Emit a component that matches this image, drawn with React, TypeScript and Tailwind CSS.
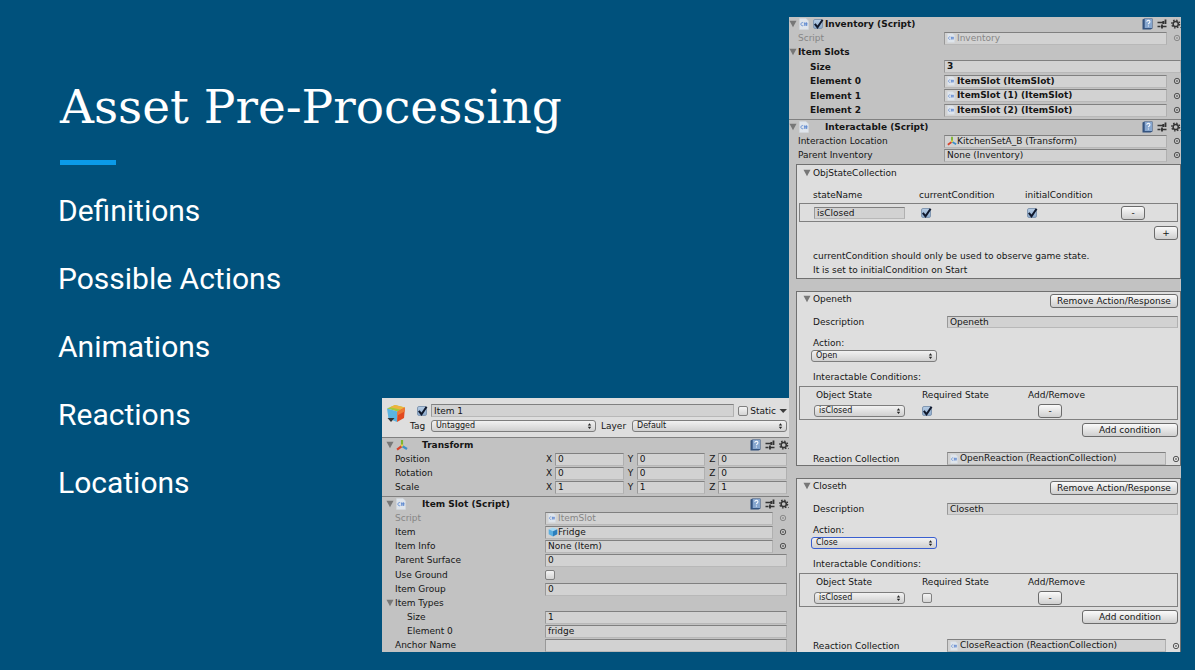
import { ReactNode, useId } from "react";

const FIELD =
  "min-w-0 border border-t-[#808080] border-l-[#999999] border-r-[#b0b0b0] border-b-[#b8b8b8] bg-[#d2d2d2]";
const BUTTON =
  "flex h-3.5 items-center justify-center rounded-[3px] border border-[#6b6b6b] bg-linear-to-b from-[#fafafa] to-[#cfcfcf]";

function Fold({ label, dark }: { label: string; dark?: boolean }) {
  return (
    <button type="button" aria-label={`Fold ${label}`} className="block w-2 shrink-0">
      <svg viewBox="0 0 8 8" className="block h-2 w-2">
        <path d={dark ? "M0.5 2h7.500L4.200 6z" : "M0.500 .8h7L4 7.200z"} fill={dark ? "#3c3c3c" : "#777777"} />
      </svg>
    </button>
  );
}

function ScriptIcon({ small }: { small?: boolean }) {
  return (
    <svg viewBox="0 0 10 12" className={small ? "h-2.5 w-2 shrink-0" : "h-3 w-2.5 shrink-0"}>
      <path d="M0.5 0.5h6.5l2.5 2.5v8.5h-9z" fill="#dfe5ec" stroke="#d2d8de" strokeWidth="0.5" />
      <path d="M4.3 4.8a1.6 1.6 0 1 0 0 2.7M5.8 4.3v3.6M7.5 4.3v3.6M5 5.4h3.6M5 6.9h3.6" fill="none" stroke="#5b86cf" strokeWidth="0.8" />
    </svg>
  );
}

function AxesIcon({ small }: { small?: boolean }) {
  return (
    <svg viewBox="0 0 12 12" className={small ? "-mr-0.5 h-2.5 w-2.5 shrink-0" : "h-3 w-3 shrink-0"}>
      <path d="M6 7V1" stroke="#7fb52e" strokeWidth="2.200" />
      <path d="M6 7l-5 3.6" stroke="#d8432b" strokeWidth="2.200" />
      <path d="M6 7l5 3" stroke="#3c8fc9" strokeWidth="2.200" />
      <path d="M6 5.5v2" stroke="#e8d24a" strokeWidth="2.200" />
    </svg>
  );
}

function CubeIcon() {
  return (
    <svg viewBox="0 0 20 20" className="h-5 w-5 shrink-0">
      <path d="M1 4.500L9 1l10 2.500-7.500 4z" fill="#a3c93a" />
      <path d="M4 3.200L9 1l10 2.500-4 2.200z" fill="#f0b23c" />
      <path d="M1 4.500l10.500 3-.5 10.500-8.500-3.500z" fill="#5bb4e0" />
      <path d="M11.500 7.500L19 3.500l-1 10.500-7 4z" fill="#e2491f" />
      <path d="M11.500 7.500L19 3.500l-.4 4-7.300 4z" fill="#ee7a35" />
      <path d="M1.500 14h7L5 18z" fill="#333333" />
    </svg>
  );
}

function PrefabIcon() {
  return (
    <svg viewBox="0 0 10 10" className="-mr-0.5 h-2.5 w-2.5 shrink-0">
      <path d="M5 0.500l4.300 1.800L5 4.300.700 2.300z" fill="#a5d8f3" />
      <path d="M.7 2.300L5 4.300v5.300L.7 7.300z" fill="#5aaee0" />
      <path d="M9.300 2.300L5 4.300v5.300l4.300-2.300z" fill="#2c7fbd" />
    </svg>
  );
}

function Tools() {
  return (
    <div className="-mr-0.5 ml-auto flex shrink-0 items-center gap-1">
      <button type="button" aria-label="Help">
        <svg viewBox="0 0 11 12" className="block h-3 w-[11px]">
          <path d="M.5 1.500L2.500.5h8v10l-2 1h-8z" fill="#34537f" />
          <path d="M2.700 1h7.300v9H2.700z" fill="#86a6cf" />
          <path d="M4.800 3.800c0-2 3.200-1.800 3.200 0 0 1.200-1.600 1.100-1.600 2.400M6.400 7.500v1.100" fill="none" stroke="#f3f7fd" strokeWidth="1.100" />
        </svg>
      </button>
      <button type="button" aria-label="Presets">
        <svg viewBox="0 0 10 10" className="block h-2.5 w-2.5">
          <path d="M0.500 3.500h6.500M0.500 7.500h3M4 7.500h5.500" stroke="#333333" strokeWidth="1.300" />
          <path d="M8.500 .5v4.500M5 5.500v4M6.300 2v3" stroke="#333333" strokeWidth="1.800" />
        </svg>
      </button>
      <button type="button" aria-label="Settings">
        <svg viewBox="0 0 12 10" className="block h-2.5 w-3">
          <circle cx="4.700" cy="5" r="2.600" fill="none" stroke="#333333" strokeWidth="1.500" />
          <circle cx="4.700" cy="5" r="3.900" fill="none" stroke="#333333" strokeWidth="1.400" strokeDasharray="1.500 1.560" />
          <path d="M9 8h3l-1.500 1.800z" fill="#333333" />
        </svg>
      </button>
    </div>
  );
}

function Check({ label, on }: { label: string; on?: boolean }) {
  return (
    <span className="relative block h-2.5 w-2.5 shrink-0">
      <input
        type="checkbox"
        aria-label={label}
        defaultChecked={on}
        className="peer block h-2.5 w-2.5 appearance-none rounded-[2px] border border-[#808080] bg-linear-to-b from-[#f4f4f4] to-[#d4d4d4] checked:border-[#8298b2] checked:from-[#b5cbe3] checked:to-[#8dabcd]"
      />
      <svg viewBox="0 0 12 12" className="pointer-events-none absolute -top-px left-0 hidden h-3 w-3 peer-checked:block">
        <path d="M1.800 5.800l2.700 3.400L9.600 1.800" fill="none" stroke="#10182c" strokeWidth="2" />
      </svg>
    </span>
  );
}

function Target({ dim }: { dim?: boolean }) {
  return (
    <button type="button" aria-label="Pick object" className={dim ? "shrink-0 opacity-50" : "shrink-0"}>
      <svg viewBox="0 0 8 8" className="block h-2 w-2">
        <circle cx="4" cy="4" r="2.700" fill="none" stroke="#444444" strokeWidth="0.900" />
        <circle cx="4" cy="4" r="0.800" fill="#333333" />
      </svg>
    </button>
  );
}

function Select({ id, label, value, width, active }: { id?: string; label?: string; value: string; width: string; active?: boolean }) {
  return (
    <span className={`relative block ${width}`}>
      <select
        id={id}
        aria-label={label}
        className={`block h-3 w-full appearance-none rounded-[3px] border bg-linear-to-b from-[#f2f2f2] to-[#d0d0d0] pl-1 text-[8px] leading-[10px] ${
          active ? "border-[#3a5fd0]" : "border-[#7d7d7d]"
        }`}
      >
        <option>{value}</option>
      </select>
      <svg viewBox="0 0 5 8" className="pointer-events-none absolute top-0.5 right-1 h-2 w-[5px]">
        <path d="M0.800 3.400h3.400L2.500 1.200zM.8 4.700h3.400L2.500 6.900z" fill="#222222" />
      </svg>
    </span>
  );
}

type RowProps = {
  label: string;
  value: string;
  col: string;
  h: string;
  indent?: boolean;
  bold?: boolean;
  dim?: boolean;
  object?: boolean;
  icon?: ReactNode;
};

function Row({ label, value, col, h, indent, bold, dim, object, icon }: RowProps) {
  const id = useId();
  return (
    <div className={`flex items-center ${h} ${bold ? "font-bold" : ""} ${dim ? "text-[#868686]" : ""}`}>
      <label htmlFor={id} className={`shrink-0 ${col} ${indent ? "pl-3" : ""}`}>
        {label}
      </label>
      <div className="flex min-w-0 flex-1 items-center gap-1.5">
        <div className={`flex h-[13px] min-w-0 flex-1 items-center gap-0.5 pl-0.5 ${FIELD}`}>
          {icon}
          <input id={id} defaultValue={value} className="w-full min-w-0 bg-transparent leading-[11px]" />
        </div>
        {object && <Target dim={dim} />}
      </div>
    </div>
  );
}

function Header({ title, icon, check }: { title: string; icon: ReactNode; check?: boolean }) {
  return (
    <div className="flex h-3.5 shrink-0 items-center font-bold">
      <Fold label={title} />
      <span className="flex w-7 shrink-0 items-center gap-1 pl-0.5">
        {icon}
        {check && <Check label={`Enable ${title}`} on />}
      </span>
      <h2>{title}</h2>
      <Tools />
    </div>
  );
}

function ActionBox({ name, value, target, required, active }: { name: string; value: string; target: string; required?: boolean; active?: boolean }) {
  const id = useId();
  return (
    <section className="flex flex-col border border-[#707070] bg-[#dedede] pl-4">
      <div className="-ml-2.5 flex h-[18px] items-start justify-between pt-px pr-0.5">
        <div className="flex items-center gap-0.5">
          <Fold label={name} />
          <h3>{name}</h3>
        </div>
        <button type="button" className={`${BUTTON} mt-px w-32`}>Remove Action/Response</button>
      </div>
      <div className="mt-1.5 flex h-3 items-center pr-0.5">
        <label htmlFor={`${id}d`} className="w-[134px] shrink-0">Description</label>
        <input id={`${id}d`} defaultValue={name} className={`${FIELD} h-3 flex-1 pl-0.5 leading-[10px]`} />
      </div>
      <label htmlFor={`${id}a`} className="mt-2 h-3.5 leading-[14px]">Action:</label>
      <div className="-ml-0.5">
        <Select id={`${id}a`} value={value} width="w-[126px]" active={active} />
      </div>
      <p className="mt-2 h-3.5 leading-[14px]">Interactable Conditions:</p>
      <div className="mt-0.5 mr-0.5 -ml-3.5 border border-[#808080] pl-3.5">
        <table className="h-8 w-full table-fixed text-left">
          <thead>
            <tr className="h-4">
              <th className="w-[108px] pl-0.5 font-normal">Object State</th>
              <th className="w-[106px] font-normal">Required State</th>
              <th className="font-normal">Add/Remove</th>
            </tr>
          </thead>
          <tbody>
            <tr className="h-4">
              <td><Select label="Object state" value="isClosed" width="w-[91px]" /></td>
              <td><Check label="Required state" on={required} /></td>
              <td><button type="button" aria-label="Remove condition" className={`${BUTTON} ml-2.5 w-6`}>-</button></td>
            </tr>
          </tbody>
        </table>
      </div>
      <button type="button" className={`${BUTTON} mt-[3px] mr-0.5 w-24 self-end`}>Add condition</button>
      <div className="mt-[15px]">
        <Row label="Reaction Collection" value={target} col="w-[134px]" h="h-[13px]" object icon={<ScriptIcon small />} />
      </div>
    </section>
  );
}

function RightPanel() {
  return (
    <aside className="flex h-[635px] w-[392px] shrink-0 flex-col overflow-hidden bg-[#c2c2c2]">
      <Header title="Inventory (Script)" icon={<ScriptIcon />} check />
      <div className="flex flex-col pl-[9px]">
        <Row label="Script" value="Inventory" col="w-[146px]" h="h-3.5" dim object icon={<ScriptIcon small />} />
        <div className="-ml-[9px] flex h-3.5 items-center font-bold"><Fold label="Item Slots" /><h3 className="pl-px">Item Slots</h3></div>
        <Row label="Size" value="3" col="w-[146px]" h="h-[15px]" bold indent />
        <Row label="Element 0" value="ItemSlot (ItemSlot)" col="w-[146px]" h="h-3.5" bold indent object icon={<ScriptIcon small />} />
        <Row label="Element 1" value="ItemSlot (1) (ItemSlot)" col="w-[146px]" h="h-[15px]" bold indent object icon={<ScriptIcon small />} />
        <Row label="Element 2" value="ItemSlot (2) (ItemSlot)" col="w-[146px]" h="h-3.5" bold indent object icon={<ScriptIcon small />} />
      </div>
      <div className="mt-0.5 border-t border-[#808080]">
        <Header title="Interactable (Script)" icon={<ScriptIcon />} />
        <div className="pl-[9px]">
          <Row label="Interaction Location" value="KitchenSetA_B (Transform)" col="w-[146px]" h="h-3.5" object icon={<AxesIcon small />} />
          <Row label="Parent Inventory" value="None (Inventory)" col="w-[146px]" h="h-3.5" object />
        </div>
      </div>
      <div className="mt-0.5 flex flex-col gap-3 pl-[7px]">
        <section className="flex flex-col border border-[#707070] bg-[#dedede] pl-4">
          <div className="-ml-2.5 flex h-4 items-center gap-0.5">
            <Fold label="ObjStateCollection" />
            <h3>ObjStateCollection</h3>
          </div>
          <div className="mt-1.5 flex h-4 items-center">
            <span className="w-[106px]">stateName</span>
            <span className="w-[106px]">currentCondition</span>
            <span>initialCondition</span>
          </div>
          <div className="mr-0.5 -ml-3.5 flex h-[19px] items-center border border-[#808080] pl-3.5">
            <input aria-label="stateName" defaultValue="isClosed" className={`${FIELD} mr-4 h-3 w-[91px] pl-0.5 leading-[10px]`} />
            <span className="w-[106px]"><Check label="currentCondition" on /></span>
            <span className="w-[94px]"><Check label="initialCondition" on /></span>
            <button type="button" aria-label="Remove state" className={`${BUTTON} w-6`}>-</button>
          </div>
          <button type="button" aria-label="Add state" className={`${BUTTON} mt-1 mr-0.5 w-6 self-end`}>+</button>
          <p className="mt-[9px] pb-px leading-[14px]">
            currentCondition should only be used to observe game state.
            <br />
            It is set to initialCondition on Start
          </p>
        </section>
        <ActionBox name="Openeth" value="Open" target="OpenReaction (ReactionCollection)" required />
        <ActionBox name="Closeth" value="Close" target="CloseReaction (ReactionCollection)" active />
      </div>
    </aside>
  );
}

const AXES = ["X", "Y", "Z"];

function Vector({ label, value, h }: { label: string; value: string; h: string }) {
  return (
    <div className={`flex items-center ${h}`}>
      <span className="w-[151px] shrink-0">{label}</span>
      <div className="flex min-w-0 flex-1 gap-1">
        {AXES.map((axis) => (
          <label key={axis} className="flex min-w-0 flex-1 items-center">
            <span className="w-[9px] shrink-0">{axis}</span>
            <input defaultValue={value} className={`${FIELD} h-[13px] w-full pl-0.5 leading-[11px]`} />
          </label>
        ))}
      </div>
    </div>
  );
}

function ItemPanel() {
  return (
    <aside className="flex h-[254px] w-[407px] shrink-0 flex-col overflow-hidden bg-[#c2c2c2]">
      <div className="flex h-10 shrink-0 gap-1 border-b border-[#808080] bg-[#dedede] pt-1.5 pr-0.5 pl-1">
        <CubeIcon />
        <div className="flex flex-1 flex-col gap-[3px]">
          <div className="flex h-[13px] items-center">
            <span className="w-[21px] pl-[7px]"><Check label="Item active" on /></span>
            <input aria-label="Name" defaultValue="Item 1" className={`${FIELD} h-[13px] flex-1 pl-0.5 leading-[11px]`} />
            <label className="flex items-center gap-0.5 pl-1">
              <Check label="Static" />
              Static
            </label>
            <span className="pl-[3px]"><Fold label="Static options" dark /></span>
          </div>
          <div className="flex h-3 items-center">
            <label htmlFor="tag" className="w-[21px]">Tag</label>
            <Select id="tag" value="Untagged" width="flex-1" />
            <label htmlFor="layer" className="w-9 pl-[5px]">Layer</label>
            <Select id="layer" value="Default" width="w-[155px]" />
          </div>
        </div>
      </div>
      <div className="border-b border-[#808080] pb-0.5 pl-1">
        <Header title="Transform" icon={<AxesIcon />} />
        <div className="pr-0.5 pl-[9px]">
          <Vector label="Position" value="0" h="h-3.5" />
          <Vector label="Rotation" value="0" h="h-3.5" />
          <Vector label="Scale" value="1" h="h-3.5" />
        </div>
      </div>
      <div className="pl-1">
        <Header title="Item Slot (Script)" icon={<ScriptIcon />} />
        <div className="pr-0.5 pl-[9px]">
          <Row label="Script" value="ItemSlot" col="w-[150px]" h="h-3.5" dim object icon={<ScriptIcon small />} />
          <Row label="Item" value="Fridge" col="w-[150px]" h="h-3.5" object icon={<PrefabIcon />} />
          <Row label="Item Info" value="None (Item)" col="w-[150px]" h="h-3.5" object />
          <Row label="Parent Surface" value="0" col="w-[150px]" h="h-3.5" />
          <div className="flex h-[15px] items-center">
            <span className="w-[150px]">Use Ground</span>
            <Check label="Use Ground" />
          </div>
          <Row label="Item Group" value="0" col="w-[150px]" h="h-3.5" />
          <div className="-ml-[9px] flex h-3.5 items-center"><Fold label="Item Types" /><h3 className="pl-px">Item Types</h3></div>
          <Row label="Size" value="1" col="w-[150px]" h="h-3.5" indent />
          <Row label="Element 0" value="fridge" col="w-[150px]" h="h-3.5" indent />
          <Row label="Anchor Name" value="" col="w-[150px]" h="h-3.5" />
        </div>
      </div>
    </aside>
  );
}

const TOPICS = ["Definitions", "Possible Actions", "Animations", "Reactions", "Locations"];

export default function App() {
  return (
    <main className="flex min-h-screen bg-[#00517c] pt-[17px] pr-3.5 pb-[18px] text-white">
      <div className="flex min-w-0 flex-1 flex-col">
        <header className="pt-[58px] pl-[60px]">
          <h1 className="font-['Roboto_Slab','DejaVu_Serif',serif] text-[47px] leading-[64px] whitespace-nowrap">Asset Pre-Processing</h1>
          <div className="mt-[21px] h-[5px] w-14 bg-[#0b9ae8]" />
        </header>
        <div className="flex flex-1 justify-between">
          <ul className="flex flex-col gap-8 pt-7 pl-[58px] font-[Roboto,sans-serif] text-[30px] leading-9 whitespace-nowrap">
            {TOPICS.map((topic) => (
              <li key={topic}>{topic}</li>
            ))}
          </ul>
          <div className="flex items-end font-['DejaVu_Sans',sans-serif] text-[9px] leading-[12px] whitespace-nowrap text-[#151515]">
            <ItemPanel />
          </div>
        </div>
      </div>
      <div className="font-['DejaVu_Sans',sans-serif] text-[9px] leading-[12px] whitespace-nowrap text-[#151515]">
        <RightPanel />
      </div>
    </main>
  );
}
